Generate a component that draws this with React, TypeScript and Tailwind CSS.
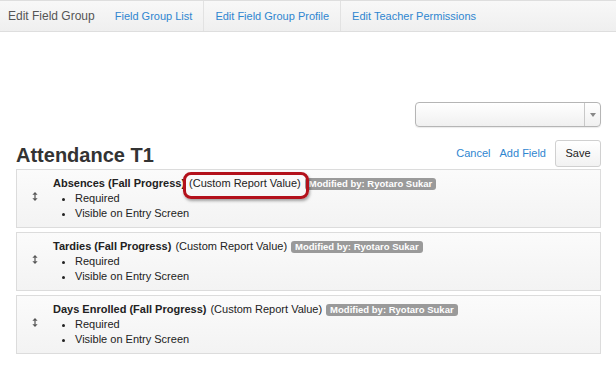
import React from "react";

const fields = [
  { name: "Absences (Fall Progress)" },
  { name: "Tardies (Fall Progress)" },
  { name: "Days Enrolled (Fall Progress)" }
];

function DragIcon() {
  return (
    <svg width="6" height="9" viewBox="0 0 6 9" className="block">
      <path d="M3 0 L5.6 2.8 L0.4 2.8 Z" fill="#555" />
      <path d="M3 9 L5.6 6.2 L0.4 6.2 Z" fill="#555" />
      <rect x="2.4" y="2.5" width="1.2" height="4" fill="#555" />
    </svg>
  );
}

function FieldRow({ name }: { name: string }) {
  return (
    <div className="flex h-[59px] border border-[#dcdcdc] bg-gradient-to-b from-[#fbfbfb] to-[#f3f3f3]">
      <div className="w-[36px] shrink-0 flex justify-center pt-[22px]">
        <DragIcon />
      </div>
      <div className="pt-[6px] text-[11px] leading-[15px] text-[#222]">
        <div className="flex items-center whitespace-nowrap">
          <span className="font-bold">{name}</span>
          <span className="ml-[4px]">(Custom Report Value)</span>
          <span className="ml-[4px] rounded-[3px] bg-[#9a9a9a] px-[4px] text-[9.5px] leading-[12px] font-bold text-white">
            Modified by: Ryotaro Sukar
          </span>
        </div>
        <ul className="list-disc pl-[22px] ml-[0px]">
          <li>Required</li>
          <li>Visible on Entry Screen</li>
        </ul>
      </div>
    </div>
  );
}

export default function App() {
  return (
    <div
      className="relative w-[616px] h-[371px] bg-white overflow-hidden"
      style={{ fontFamily: '"Liberation Sans", Arial, Helvetica, sans-serif' }}
    >
      <nav className="flex h-[32px] items-stretch border-t border-b border-[#dedede] bg-gradient-to-b from-[#f8f8f8] to-[#efefef] text-[11px]">
        <div className="flex items-center pl-[8px] pr-[20px] text-[12px] text-[#555]">
          Edit Field Group
        </div>
        <a className="flex items-center pr-[11px] text-[#2f86d0]">Field Group List</a>
        <a className="flex items-center border-l border-[#e2e2e2] px-[11px] text-[#2f86d0]">
          Edit Field Group Profile
        </a>
        <a className="flex items-center border-l border-[#e2e2e2] px-[11px] text-[#2f86d0]">
          Edit Teacher Permissions
        </a>
      </nav>

      <div className="pl-[16px] pr-[15px]">
        <div className="flex justify-end pt-[70px]">
          <div className="flex h-[25px] w-[186px] rounded-[4px] border border-[#b5b5b5] bg-gradient-to-b from-white to-[#f0f0f0] shadow-[0_1px_1px_rgba(0,0,0,0.08)]">
            <div className="flex-1" />
            <div className="flex w-[16px] items-center justify-center border-l border-[#c8c8c8]">
              <svg width="6" height="4" viewBox="0 0 6 4">
                <path d="M0 0 L6 0 L3 4 Z" fill="#888" />
              </svg>
            </div>
          </div>
        </div>

        <div className="mt-[13px] flex h-[27px] items-end justify-between">
          <h1 className="text-[20px] leading-[24px] font-bold text-[#333]">Attendance T1</h1>
          <div className="flex h-[27px] items-center">
            <a className="text-[11px] text-[#2f86d0]">Cancel</a>
            <a className="ml-[9px] text-[11px] text-[#2f86d0]">Add Field</a>
            <button className="ml-[9px] h-[27px] w-[46px] rounded-[3px] border border-[#d0d0d0] bg-gradient-to-b from-white to-[#f2f2f2] text-[11px] text-[#222]">
              Save
            </button>
          </div>
        </div>

        <div className="mt-[2px] flex flex-col gap-[4px]">
          {fields.map(f => (
            <FieldRow key={f.name} name={f.name} />
          ))}
        </div>
      </div>

      <div className="absolute left-[183px] top-[172px] h-[27px] w-[126px] rounded-[8px] border-[3px] border-[#b3111b] shadow-[1px_2px_3px_rgba(0,0,0,0.35)]" />
    </div>
  );
}
